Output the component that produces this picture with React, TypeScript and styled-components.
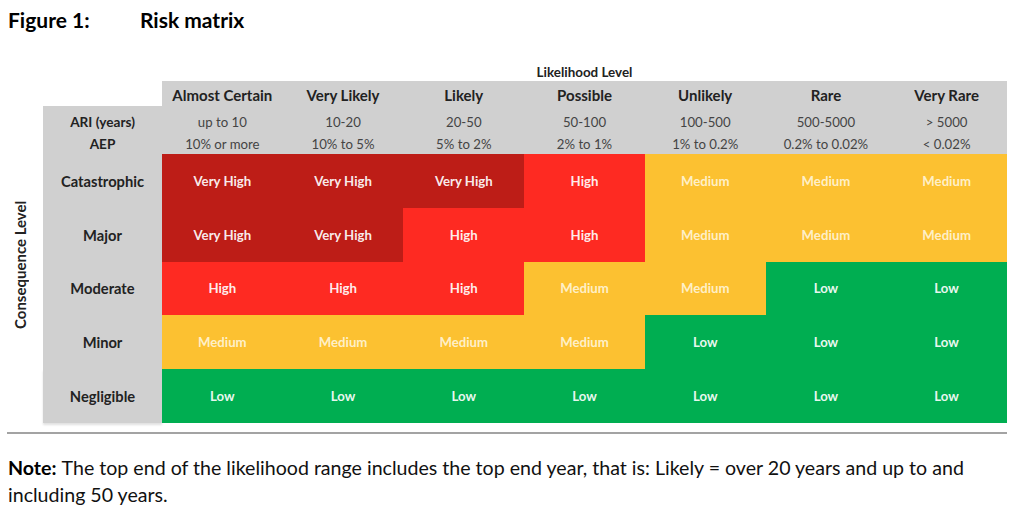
import React from 'react';
import styled, { createGlobalStyle } from 'styled-components';

const GlobalStyle = createGlobalStyle`
  html, body {
    margin: 0;
    padding: 0;
    background: #ffffff;
  }
  body {
    font-family: Lato, "Open Sans", "Liberation Sans", sans-serif;
    color: #111;
  }
`;

type Level = 'VH' | 'H' | 'M' | 'L';

const levelColors: Record<Level, string> = {
  VH: '#bd1d17',
  H: '#fe2a22',
  M: '#fcc131',
  L: '#00ae51',
};

const levelLabels: Record<Level, string> = {
  VH: 'Very High',
  H: 'High',
  M: 'Medium',
  L: 'Low',
};

const columns = [
  { name: 'Almost Certain', ari: 'up to 10', aep: '10% or more' },
  { name: 'Very Likely', ari: '10-20', aep: '10% to 5%' },
  { name: 'Likely', ari: '20-50', aep: '5% to 2%' },
  { name: 'Possible', ari: '50-100', aep: '2% to 1%' },
  { name: 'Unlikely', ari: '100-500', aep: '1% to 0.2%' },
  { name: 'Rare', ari: '500-5000', aep: '0.2% to 0.02%' },
  { name: 'Very Rare', ari: '> 5000', aep: '< 0.02%' },
];

const rows: { name: string; cells: Level[] }[] = [
  { name: 'Catastrophic', cells: ['VH', 'VH', 'VH', 'H', 'M', 'M', 'M'] },
  { name: 'Major', cells: ['VH', 'VH', 'H', 'H', 'M', 'M', 'M'] },
  { name: 'Moderate', cells: ['H', 'H', 'H', 'M', 'M', 'L', 'L'] },
  { name: 'Minor', cells: ['M', 'M', 'M', 'M', 'L', 'L', 'L'] },
  { name: 'Negligible', cells: ['L', 'L', 'L', 'L', 'L', 'L', 'L'] },
];

const Page = styled.div`
  width: 1022px;
  height: 511px;
  overflow: hidden;
  padding-top: 8px;
  box-sizing: border-box;
`;

const Title = styled.h1`
  margin: 0 0 0 8px;
  display: flex;
  font-size: 21px;
  line-height: 24px;
  font-weight: 700;
  color: #000;
`;

const TitleNumber = styled.span`
  width: 132px;
`;

const Matrix = styled.div`
  margin-top: 30px;
  width: 1007px;
  display: grid;
  grid-template-columns: 43px 119px repeat(7, 1fr);
  grid-template-rows: 19px 25px 28px 20px repeat(5, 53.8px);
`;

const Spacer = styled.div`
  grid-column: 1 / span 2;
`;

const AxisTitle = styled.div`
  grid-column: 3 / span 7;
  display: flex;
  align-items: center;
  justify-content: center;
  font-size: 13.4px;
  font-weight: 700;
  color: #222;
`;

const SideTitle = styled.div`
  grid-column: 1;
  grid-row: 5 / span 5;
  display: flex;
  align-items: center;
  justify-content: center;
  padding-top: 48px;
  padding-left: 4px;
  writing-mode: vertical-rl;
  transform: rotate(180deg);
  font-size: 15px;
  font-weight: 700;
  color: #222;
`;

const HeadCell = styled.div`
  background: #d0d0d0;
  display: flex;
  align-items: flex-end;
  justify-content: center;
  padding-bottom: 2px;
  font-size: 15px;
  font-weight: 700;
  color: #222;
`;

const InfoLabel = styled.div<{ $top?: boolean }>`
  grid-column: 2;
  background: #d0d0d0;
  display: flex;
  align-items: center;
  justify-content: center;
  padding-top: ${(p) => (p.$top ? '4px' : '0')};
  font-size: 13.6px;
  font-weight: 700;
  color: #222;
`;

const InfoCell = styled.div<{ $top?: boolean }>`
  background: #d0d0d0;
  display: flex;
  align-items: center;
  justify-content: center;
  padding-top: ${(p) => (p.$top ? '4px' : '0')};
  font-size: 13.2px;
  color: #444;
`;

const RowLabel = styled.div<{ $last?: boolean }>`
  grid-column: 2;
  background: #d0d0d0;
  display: flex;
  align-items: center;
  justify-content: center;
  font-size: 14.7px;
  font-weight: 700;
  color: #222;
  box-shadow: ${(p) => (p.$last ? '0 2px 2px rgba(0, 0, 0, 0.12)' : 'none')};
`;

const RiskCell = styled.div<{ $level: Level }>`
  background: ${(p) => levelColors[p.$level]};
  display: flex;
  align-items: center;
  justify-content: center;
  font-size: 13.2px;
  font-weight: 700;
  color: ${(p) => (p.$level === 'M' ? 'rgba(255, 246, 220, 0.9)' : 'rgba(255, 255, 255, 0.93)')};
`;

const Rule = styled.hr`
  margin: 9px 0 0 7px;
  width: 1000px;
  border: none;
  border-top: 2px solid #a3a3a3;
`;

const Note = styled.div`
  margin: 20px 0 0 8px;
  font-size: 19.6px;
  line-height: 27px;
  color: #111;
`;

const NoteLine = styled.div`
  display: flex;
  gap: 5px;
  white-space: nowrap;
`;

const NoteLead = styled.strong`
  font-weight: 700;
  color: #000;
`;

export default function App() {
  return (
    <Page>
      <GlobalStyle />
      <Title>
        <TitleNumber>Figure 1:</TitleNumber>
        <span>Risk matrix</span>
      </Title>

      <Matrix>
        <AxisTitle>Likelihood Level</AxisTitle>

        <Spacer />
        {columns.map((c) => (
          <HeadCell key={c.name}>{c.name}</HeadCell>
        ))}

        <InfoLabel $top>ARI (years)</InfoLabel>
        {columns.map((c) => (
          <InfoCell key={c.name} $top>
            {c.ari}
          </InfoCell>
        ))}

        <InfoLabel>AEP</InfoLabel>
        {columns.map((c) => (
          <InfoCell key={c.name}>{c.aep}</InfoCell>
        ))}

        <SideTitle>Consequence Level</SideTitle>
        {rows.map((r, i) => (
          <React.Fragment key={r.name}>
            <RowLabel $last={i === rows.length - 1}>{r.name}</RowLabel>
            {r.cells.map((lv, j) => (
              <RiskCell key={j} $level={lv}>
                {levelLabels[lv]}
              </RiskCell>
            ))}
          </React.Fragment>
        ))}
      </Matrix>

      <Rule />

      <Note>
        <NoteLine>
          <NoteLead>Note:</NoteLead>
          <span>The top end of the likelihood range includes the top end year, that is: Likely = over 20 years and up to and</span>
        </NoteLine>
        <NoteLine>
          <span>including 50 years.</span>
        </NoteLine>
      </Note>
    </Page>
  );
}
